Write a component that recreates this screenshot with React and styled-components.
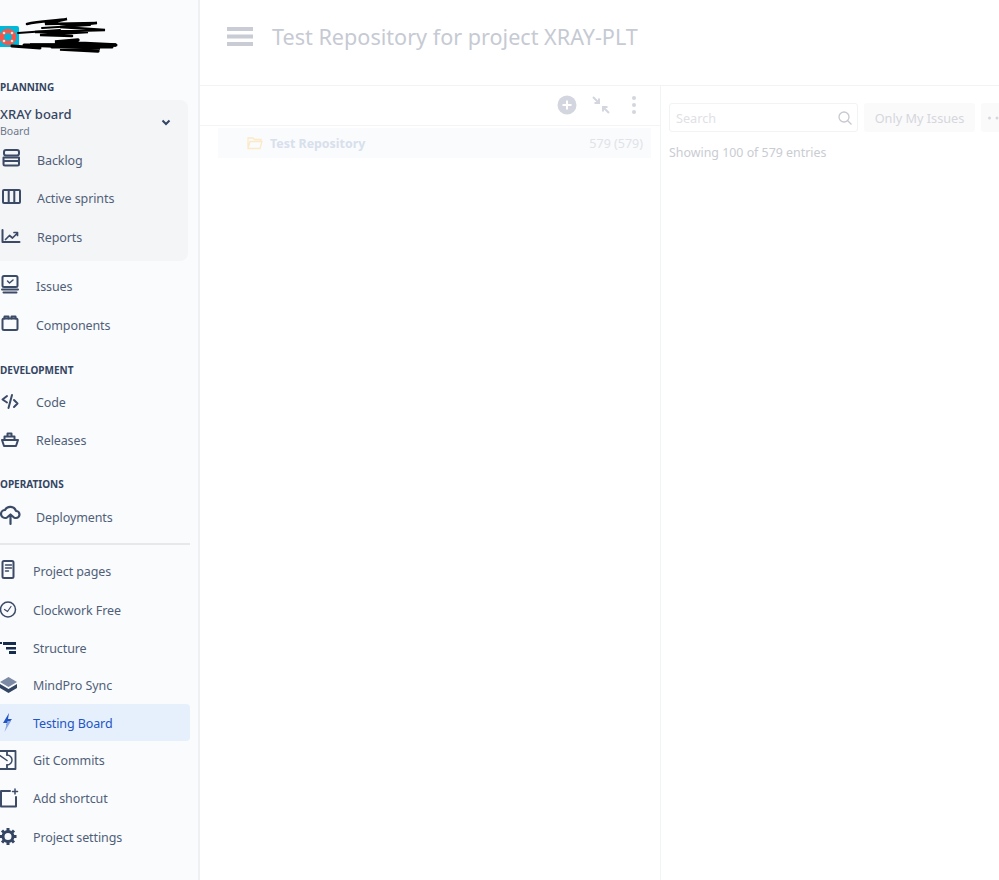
import React from 'react';
import styled, { createGlobalStyle } from 'styled-components';

const GlobalStyle = createGlobalStyle`
  html, body {
    margin: 0;
    padding: 0;
    background: #fff;
    font-family: "Noto Sans", "Open Sans", sans-serif;
  }
  * { box-sizing: border-box; }
`;

const Page = styled.div`
  display: flex;
  width: 999px;
  height: 880px;
  overflow: hidden;
`;

const Sidebar = styled.nav`
  flex: none;
  width: 200px;
  height: 880px;
  padding-right: 8px;
  background: #fafbfd;
  border-right: 2px solid #eff0f3;
  color: #42526e;
`;

const Brand = styled.div`
  height: 78px;
`;

const SectionLabel = styled.div`
  height: 18px;
  margin-top: ${(p) => p.$top || 0}px;
  margin-bottom: 4px;
  font-size: 10px;
  font-weight: 700;
  line-height: 18px;
  color: #344563;
`;

const BoardGroup = styled.div`
  width: 188px;
  height: 161px;
  margin-bottom: 5px;
  background: #f4f5f7;
  border-radius: 0 8px 8px 0;
`;

const BoardHeader = styled.div`
  display: flex;
  align-items: center;
  justify-content: space-between;
  height: 41px;
  padding: 2px 16px 0 0;
`;

const BoardName = styled.div`
  font-size: 13px;
  font-weight: 500;
  line-height: 18px;
  color: #344563;
`;

const BoardType = styled.div`
  font-size: 10.5px;
  line-height: 16px;
  color: #6b778c;
`;

const Row = styled.div`
  display: flex;
  align-items: center;
  height: ${(p) => p.$h || 38}px;
  padding-top: ${(p) => (p.$active ? 1 : 0)}px;
  border-radius: 0 4px 4px 0;
  font-size: 12.5px;
  letter-spacing: -0.1px;
  color: ${(p) => (p.$active ? '#2255c4' : '#505f79')};
  background: ${(p) => (p.$active ? '#e6effc' : 'transparent')};
`;

const IconSlot = styled.span`
  display: flex;
  flex: none;
  align-items: center;
  width: ${(p) => p.$w}px;
`;

const Divider = styled.div`
  height: 2px;
  margin: 6px 0 7px;
  background: #e6e8ec;
`;

const Main = styled.main`
  flex: 1;
  min-width: 0;
  display: flex;
  flex-direction: column;
`;

const TopBar = styled.header`
  display: flex;
  flex: none;
  align-items: center;
  gap: 19px;
  height: 86px;
  padding: 0 0 12px 27px;
  border-bottom: 1px solid #f2f3f5;
`;

const Title = styled.h1`
  margin: 0;
  font-size: 21.6px;
  font-weight: 400;
  color: #c6cad3;
`;

const Panes = styled.div`
  display: flex;
  flex: 1;
`;

const TreePane = styled.section`
  flex: none;
  width: 461px;
  border-right: 1px solid #f2f3f5;
`;

const TreeToolbar = styled.div`
  display: flex;
  align-items: center;
  justify-content: flex-end;
  height: 40px;
  padding: 0 17px 1px 0;
  gap: 14px;
  border-bottom: 1px solid #f3f4f6;
`;

const TreeRow = styled.div`
  display: flex;
  align-items: center;
  width: 433px;
  height: 30px;
  margin: 2px 0 0 18px;
  padding: 0 8px 0 29px;
  background: #fafbfd;
`;

const TreeName = styled.span`
  flex: 1;
  margin-left: 7px;
  font-size: 12.4px;
  font-weight: 700;
  color: #d7e0ec;
`;

const TreeCount = styled.span`
  font-size: 12.5px;
  color: #e0e3e8;
`;

const IssuePane = styled.section`
  flex: 1;
  min-width: 0;
  padding: 17px 0 0 8px;
  overflow: hidden;
`;

const FilterBar = styled.div`
  display: flex;
  gap: 6px;
  width: 340px;
  height: 29px;
`;

const SearchBox = styled.div`
  display: flex;
  flex: none;
  align-items: center;
  justify-content: space-between;
  width: 189px;
  padding: 0 4px 0 6px;
  border: 1px solid #f2f3f5;
  border-radius: 3px;
  font-size: 12.7px;
  color: #dfe1e6;
`;

const FilterButton = styled.div`
  display: flex;
  flex: none;
  align-items: center;
  justify-content: center;
  width: ${(p) => p.$w}px;
  border-radius: 3px;
  background: #fafafb;
  font-size: 12.7px;
  color: #d5d7dc;
`;

const Entries = styled.div`
  margin-top: 12px;
  font-size: 12.4px;
  line-height: 18px;
  color: #c9ccd2;
`;

const ink = { fill: 'none', stroke: '#3b4a67', strokeWidth: 2, strokeLinejoin: 'round', strokeLinecap: 'round' };

function Icon({ children, dy = 0 }) {
  return (
    <svg width="24" height="24" viewBox="0 0 24 24">
      <g {...ink} transform={`translate(0 ${dy})`}>{children}</g>
    </svg>
  );
}

function LogoMark() {
  return (
    <svg width="120" height="78" viewBox="0 0 120 78" style={{ display: 'block' }}>
      <rect x="-3" y="26" width="22" height="21" rx="2" fill="#00b8d9" />
      <circle cx="8" cy="37" r="6" fill="none" stroke="#f4574a" strokeWidth="4.5" />
      <g fill="#fbe3df">
        <circle cx="4" cy="33" r="1.3" /><circle cx="12" cy="33" r="1.3" />
        <circle cx="4" cy="41" r="1.3" /><circle cx="12" cy="41" r="1.3" />
      </g>
      <g fill="none" stroke="#000" strokeLinecap="round">
        <path d="M27 24C40 21 55 21 67 19L45 24 97 23 60 27 105 30 35 32 88 32 40 35 72 36" strokeWidth="2.6" />
        <path d="M18 33L60 30M42 28L90 25" strokeWidth="2" />
        <path d="M78 40L55 42 116 45 30 45 100 48 60 49 98 51" strokeWidth="3.4" />
        <path d="M24 45H116M12 46L40 48M52 47H112" strokeWidth="3" />
      </g>
    </svg>
  );
}

const BacklogIcon = () => (
  <Icon dy={1}><rect x="4" y="1" width="15" height="5.500" rx="2" /><rect x="3.500" y="8.500" width="15.500" height="3.500" /><rect x="3.500" y="12" width="15.500" height="4.500" rx="1.500" /></Icon>
);
const SprintIcon = () => (
  <Icon><rect x="3" y="4" width="17" height="13" rx="1" /><path d="M8.700 4v13M14.300 4v13" /></Icon>
);
const ReportsIcon = () => (
  <Icon dy={2}><path d="M2.500 3v12h17" /><path d="M5.500 12.500l4-4 3 2.500 5-5M14 5.500h3.500v3" strokeWidth="1.700" /></Icon>
);
const IssuesIcon = () => (
  <Icon><rect x="2.500" y="2" width="15" height="11" rx="1.500" /><path d="M7.500 7l2 2 3.500-3" strokeWidth="1.500" /><path d="M2 15.500h16M3.500 18.500h13" /></Icon>
);
const ComponentsIcon = () => (
  <Icon dy={-0.5}><rect x="2.500" y="6" width="15" height="11.500" rx="1.500" /><path d="M4.500 6V4h4v2M11.500 6V4h4v2" /></Icon>
);
const CodeIcon = () => (
  <Icon dy={3}><path d="M7 3L2.500 6.500 7 9.500M12 2L8.500 15M14 7l3.500 3.500L14 14" /></Icon>
);
const ReleasesIcon = () => (
  <Icon dy={1}><path d="M2 11h16l-2 6H4zM4.500 11V7.500h10V11M7.500 7.500V4.500h4v3" strokeWidth="2" /></Icon>
);
const DeployIcon = () => (
  <Icon dy={-1}><path d="M6 14H5a4 4 0 0 1 0-8 6 6 0 0 1 11 1 3.500 3.500 0 0 1 0 7h-1" strokeWidth="2.200" /><path d="M10.500 20v-9M7 13.500l3.500-3 3.500 3" strokeWidth="2.200" /></Icon>
);
const PagesIcon = () => (
  <Icon><rect x="2.500" y="2" width="11" height="17" rx="1.500" /><path d="M5.500 6h6M5.500 9h6M5.500 12h3" strokeWidth="1.500" /></Icon>
);
const ClockIcon = () => (
  <Icon dy={1.500}><circle cx="8" cy="10" r="7.500" strokeWidth="1.500" /><path d="M4.500 10l3 2 3.500-5" strokeWidth="1.200" /></Icon>
);
const StructureIcon = () => (
  <svg width="24" height="24" viewBox="0 0 24 24">
    <g fill="#172b4d">
      <rect x="0" y="5" width="2" height="2" /><rect x="3" y="5" width="13" height="3" />
      <rect x="6" y="10" width="10" height="2.500" /><rect x="9" y="14" width="7" height="3" />
    </g>
  </svg>
);
const MindProIcon = () => (
  <svg width="24" height="24" viewBox="0 0 24 24">
    <g transform="translate(0 1)">
      <path d="M8.500 2l8.500 5-8.500 5L0 7z" fill="#7d8aa5" />
      <path d="M0 9l8.500 5L17 9v4l-8.500 5L0 13z" fill="#344563" />
    </g>
  </svg>
);
const BoltIcon = () => (
  <svg width="24" height="24" viewBox="0 0 24 24">
    <path d="M9 2L3 12h4l-1 3 6-7H8z" fill="#2255c4" />
    <path d="M7.500 10H11L4.500 21z" fill="#8aa6e0" />
  </svg>
);
const GitIcon = () => (
  <Icon><path d="M0 3h15.500v18H0M7 3v4M7 17v4" strokeWidth="1.800" /><path d="M0 7.500l7 5M7 7a5 5 0 0 1 0 10" strokeWidth="1.500" /></Icon>
);
const AddIcon = () => (
  <Icon dy={2}><path d="M10 3H1v15.500h15V9" /><path d="M15 1v5M12.500 3.500h5" strokeWidth="1.500" /></Icon>
);
const GearIcon = () => (
  <svg width="24" height="24" viewBox="0 0 24 24">
    <g transform="translate(0 1.500)">
      <circle cx="8" cy="10" r="5" fill="none" stroke="#344563" strokeWidth="3" />
      <path d="M8 1.500v3M8 15.500v3M-.5 10h3M13.500 10h3M2 4l2 2M12 14l2 2M14 4l-2 2M4 14l-2 2" stroke="#344563" strokeWidth="3" />
    </g>
  </svg>
);

const groupRows = [
  { label: 'Backlog', icon: <BacklogIcon />, h: 38 },
  { label: 'Active sprints', icon: <SprintIcon />, h: 38 },
  { label: 'Reports', icon: <ReportsIcon />, h: 40 },
];

const bottomRows = [
  { label: 'Project pages', icon: <PagesIcon />, h: 38 },
  { label: 'Clockwork Free', icon: <ClockIcon />, h: 40 },
  { label: 'Structure', icon: <StructureIcon />, h: 37 },
  { label: 'MindPro Sync', icon: <MindProIcon />, h: 37 },
  { label: 'Testing Board', icon: <BoltIcon />, h: 37, active: true },
  { label: 'Git Commits', icon: <GitIcon />, h: 38 },
  { label: 'Add shortcut', icon: <AddIcon />, h: 38 },
  { label: 'Project settings', icon: <GearIcon />, h: 40 },
];

function NavRow({ row, w }) {
  return (
    <Row $h={row.h} $active={row.active}>
      <IconSlot $w={w}>{row.icon}</IconSlot>
      {row.label}
    </Row>
  );
}

export default function App() {
  return (
    <Page>
      <GlobalStyle />
      <Sidebar>
        <Brand><LogoMark /></Brand>
        <SectionLabel>PLANNING</SectionLabel>
        <BoardGroup>
          <BoardHeader>
            <div>
              <BoardName>XRAY board</BoardName>
              <BoardType>Board</BoardType>
            </div>
            <svg width="12" height="12" viewBox="0 0 12 12">
              <path d="M2.500 4.500L6 8l3.500-3.500" fill="none" stroke="#344563" strokeWidth="2" />
            </svg>
          </BoardHeader>
          {groupRows.map((r) => <NavRow key={r.label} row={r} w={37} />)}
        </BoardGroup>
        <NavRow row={{ label: 'Issues', icon: <IssuesIcon />, h: 40 }} w={36} />
        <NavRow row={{ label: 'Components', icon: <ComponentsIcon />, h: 38 }} w={36} />
        <SectionLabel $top={17}>DEVELOPMENT</SectionLabel>
        <NavRow row={{ label: 'Code', icon: <CodeIcon />, h: 38 }} w={36} />
        <NavRow row={{ label: 'Releases', icon: <ReleasesIcon />, h: 38 }} w={36} />
        <SectionLabel $top={16}>OPERATIONS</SectionLabel>
        <NavRow row={{ label: 'Deployments', icon: <DeployIcon />, h: 40 }} w={36} />
        <Divider />
        {bottomRows.map((r) => <NavRow key={r.label} row={r} w={33} />)}
      </Sidebar>
      <Main>
        <TopBar>
          <svg width="26" height="19" viewBox="0 0 26 19">
            <path d="M0 2h26M0 9.500h26M0 17h26" stroke="#c9ccd5" strokeWidth="4" />
          </svg>
          <Title>Test Repository for project XRAY-PLT</Title>
        </TopBar>
        <Panes>
          <TreePane>
            <TreeToolbar>
              <svg width="20" height="20" viewBox="0 0 20 20">
                <circle cx="10" cy="10" r="9.500" fill="#d3d6de" />
                <path d="M10 5.500v9M5.500 10h9" stroke="#fff" strokeWidth="2" />
              </svg>
              <svg width="20" height="20" viewBox="0 0 20 20">
                <path d="M2 2l6 6M8 3.500V8H3.500M18 18l-6-6M12 16.500V12h4.500" fill="none" stroke="#d3d6de" strokeWidth="2" />
              </svg>
              <svg width="18" height="20" viewBox="0 0 18 20">
                <g fill="#d3d6de"><circle cx="9" cy="3" r="2" /><circle cx="9" cy="10" r="2" /><circle cx="9" cy="17" r="2" /></g>
              </svg>
            </TreeToolbar>
            <TreeRow>
              <svg width="16" height="14" viewBox="0 0 16 14">
                <path d="M1 12.500V2h5l1.500 1.500H14v2M1 12.500l2-7h12l-2 7z" fill="none" stroke="#fce9c8" strokeWidth="1.300" />
              </svg>
              <TreeName>Test Repository</TreeName>
              <TreeCount>579 (579)</TreeCount>
            </TreeRow>
          </TreePane>
          <IssuePane>
            <FilterBar>
              <SearchBox>
                Search
                <svg width="16" height="16" viewBox="0 0 16 16">
                  <circle cx="7" cy="7" r="5" fill="none" stroke="#c6c9cf" strokeWidth="1.300" />
                  <path d="M10.500 10.500L14.500 14.500" stroke="#c6c9cf" strokeWidth="1.300" />
                </svg>
              </SearchBox>
              <FilterButton $w={111}>Only My Issues</FilterButton>
              <FilterButton $w={30}>
                <svg width="30" height="6" viewBox="0 0 30 6">
                  <g fill="#d5d7dc"><circle cx="8.500" cy="3" r="1.500" /><circle cx="16" cy="3" r="1.500" /></g>
                </svg>
              </FilterButton>
            </FilterBar>
            <Entries>Showing 100 of 579 entries</Entries>
          </IssuePane>
        </Panes>
      </Main>
    </Page>
  );
}
